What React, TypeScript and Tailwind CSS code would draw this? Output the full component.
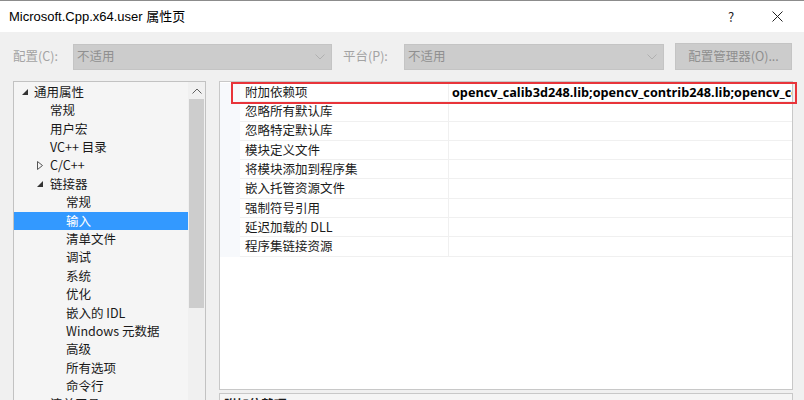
import React from 'react';

const font = { fontFamily: '"Noto Sans CJK SC", "Noto Sans", sans-serif' };

type TreeItem = {
  label: string;
  level: 0 | 1 | 2;
  expander?: 'open' | 'closed';
  selected?: boolean;
};

const treeItems: TreeItem[] = [
  { label: '通用属性', level: 0, expander: 'open' },
  { label: '常规', level: 1 },
  { label: '用户宏', level: 1 },
  { label: 'VC++ 目录', level: 1 },
  { label: 'C/C++', level: 1, expander: 'closed' },
  { label: '链接器', level: 1, expander: 'open' },
  { label: '常规', level: 2 },
  { label: '输入', level: 2, selected: true },
  { label: '清单文件', level: 2 },
  { label: '调试', level: 2 },
  { label: '系统', level: 2 },
  { label: '优化', level: 2 },
  { label: '嵌入的 IDL', level: 2 },
  { label: 'Windows 元数据', level: 2 },
  { label: '高级', level: 2 },
  { label: '所有选项', level: 2 },
  { label: '命令行', level: 2 },
  { label: '清单工具', level: 1, expander: 'closed' },
];

const properties = [
  { name: '附加依赖项', value: 'opencv_calib3d248.lib;opencv_contrib248.lib;opencv_core248.lib;opencv_features2d248.lib' },
  { name: '忽略所有默认库', value: '' },
  { name: '忽略特定默认库', value: '' },
  { name: '模块定义文件', value: '' },
  { name: '将模块添加到程序集', value: '' },
  { name: '嵌入托管资源文件', value: '' },
  { name: '强制符号引用', value: '' },
  { name: '延迟加载的 DLL', value: '' },
  { name: '程序集链接资源', value: '' },
];

const levelPad = { 0: 'pl-[20px]', 1: 'pl-[36px]', 2: 'pl-[52px]' } as const;

function Chevron({ className = '' }: { className?: string }) {
  return (
    <svg width="10" height="6" viewBox="0 0 10 6" className={className}>
      <path d="M0.5 0.5 L5 5 L9.5 0.5" fill="none" stroke="currentColor" strokeWidth="1" />
    </svg>
  );
}

function Expander({ kind }: { kind: 'open' | 'closed' }) {
  if (kind === 'open') {
    return (
      <svg width="6" height="6" viewBox="0 0 6 6" className="text-[#333]">
        <path d="M6 0 L6 6 L0 6 Z" fill="currentColor" />
      </svg>
    );
  }
  return (
    <svg width="6" height="9" viewBox="0 0 6 9" className="text-[#555]">
      <path d="M0.5 0.5 L5.5 4.5 L0.5 8.5 Z" fill="none" stroke="currentColor" strokeWidth="1" />
    </svg>
  );
}

function Dropdown({ width }: { width: string }) {
  return (
    <div className={`${width} h-[26px] bg-[#cccccc] border border-[#c4c4c4] flex items-center justify-between pl-[3px] pr-[6px] text-[#8f8f8f]`}>
      <span>不适用</span>
      <Chevron className="text-[#b0b0b0]" />
    </div>
  );
}

export default function App() {
  return (
    <div className="w-[804px] h-[400px] overflow-hidden bg-[#f0f0f0] text-[12.5px] text-[#1a1a1a] border-t border-[#8c8c8c]" style={font}>
      {/* title bar */}
      <div className="h-[31px] bg-white flex items-center pl-[9px]">
        <span
          className="text-[13px] text-black"
          style={{ fontFamily: '"Liberation Sans", "Noto Sans CJK SC", sans-serif' }}
        >
          Microsoft.Cpp.x64.user 属性页
        </span>
        <div className="ml-auto flex items-center">
          <span className="w-[46px] text-center text-[13px] text-[#222]">?</span>
          <span className="w-[46px] flex justify-center mr-[4px]">
            <svg width="11" height="11" viewBox="0 0 11 11" className="text-[#222]">
              <path d="M0.5 0.5 L10.5 10.5 M10.5 0.5 L0.5 10.5" stroke="currentColor" strokeWidth="1" />
            </svg>
          </span>
        </div>
      </div>

      {/* configuration toolbar */}
      <div className="h-[49px] flex items-center pl-[13px] border-l-[3px] border-[#9a9a9a] -ml-[3px]">
        <span className="w-[60px] text-[#a3a3a3]">配置(C):</span>
        <Dropdown width="w-[259px]" />
        <span className="ml-[11px] w-[61px] text-[#a3a3a3]">平台(P):</span>
        <Dropdown width="w-[260px]" />
        <div className="ml-[11px] w-[117px] h-[27px] bg-[#cccccc] border border-[#c4c4c4] flex items-center justify-center text-[#8f8f8f]">
          配置管理器(O)...
        </div>
      </div>

      {/* main area */}
      <div className="flex gap-[13px] pl-[13px]">
        {/* tree */}
        <div className="w-[193px] h-[330px] border border-[#c2c2c2] bg-[#f5f5f5] flex">
          <div className="flex-1 pt-[1px]">
            {treeItems.map((item, i) => (
              <div
                key={i}
                className={`h-[18.4px] flex items-center ${levelPad[item.level]} relative ${item.selected ? 'bg-[#3399ff] text-white' : ''}`}
              >
                {item.expander && (
                  <span className="absolute top-0 bottom-0 flex items-center" style={{ left: item.level === 0 ? 8 : 23 }}>
                    <Expander kind={item.expander} />
                  </span>
                )}
                <span className="whitespace-nowrap">{item.label}</span>
              </div>
            ))}
          </div>
          <div className="w-[17px] bg-[#f0f0f0] flex flex-col items-center">
            <div className="h-[17px] flex items-center justify-center text-[#606060]">
              <Chevron className="rotate-180" />
            </div>
            <div className="w-[15px] h-[209px] bg-[#cdcdcd]" />
          </div>
        </div>

        {/* property grid + description */}
        <div className="w-[574px] flex flex-col gap-[3px]">
          <div className="h-[309px] border border-[#c8c8c8] bg-white pt-[1px] relative">
            {properties.map((p, i) => (
              <div key={i} className="h-[19.3px] flex">
                <div className="w-[20px] bg-[#f7f9fc]" />
                <div className="w-[209px] flex items-center pl-[5px] border-b border-r border-[#f0f0f0] whitespace-nowrap">
                  {p.name}
                </div>
                <div className="flex-1 min-w-0 flex items-center pl-[3px] border-b border-[#f0f0f0] overflow-hidden">
                  <span className="font-bold whitespace-nowrap text-[12.7px] text-black" style={{ fontFamily: '"Open Sans", "Noto Sans", sans-serif' }}>
                    {p.value}
                  </span>
                </div>
              </div>
            ))}
            {/* red highlight annotation */}
            <div className="absolute left-[11px] -right-[5px] top-[0px] h-[22px] border-2 border-[#e8343a]" />
          </div>
          <div className="h-[40px] border border-[#c8c8c8] bg-[#f5f5f5] pl-[4px] pt-[1px] font-bold">
            附加依赖项
          </div>
        </div>
      </div>
    </div>
  );
}
